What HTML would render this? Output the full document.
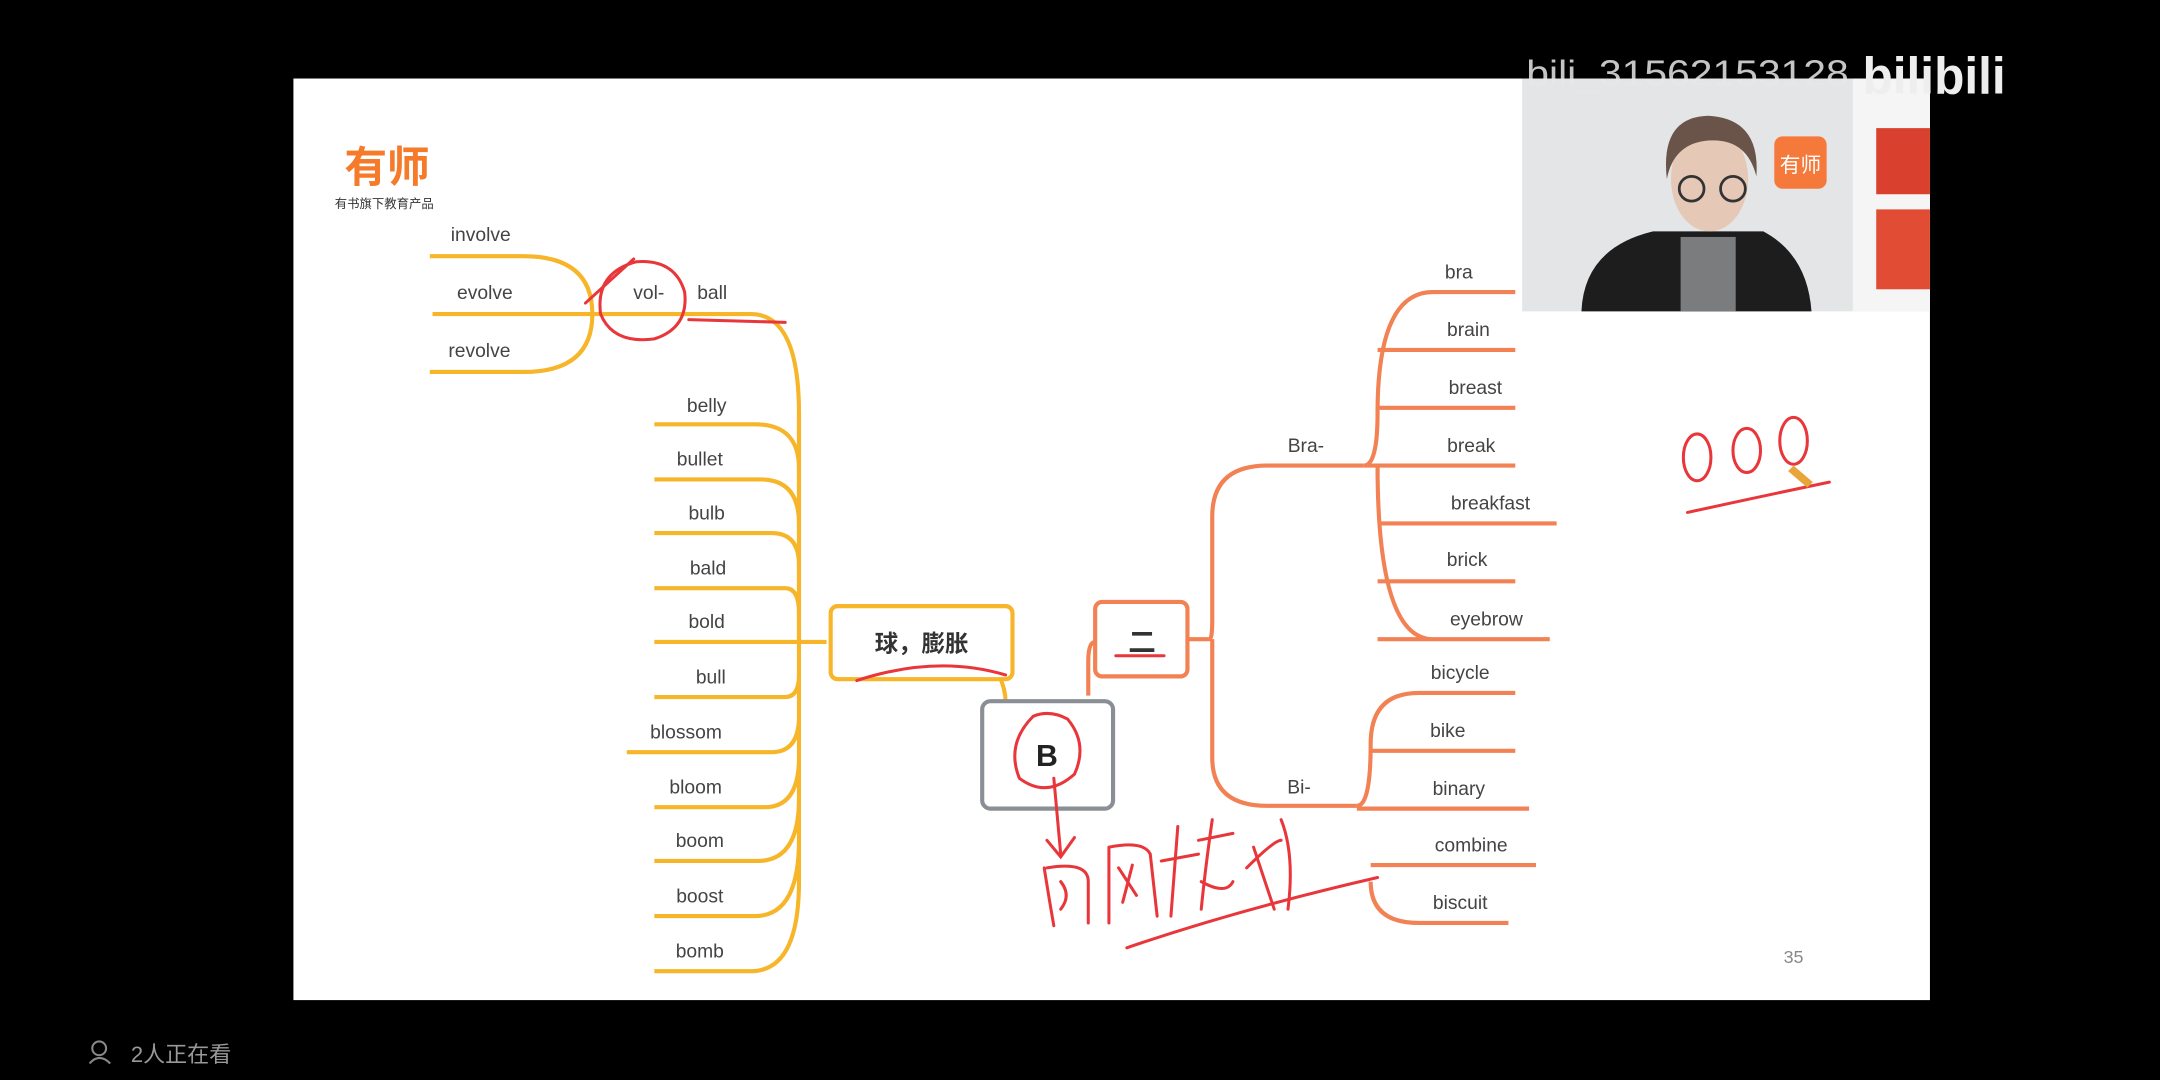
<!DOCTYPE html>
<html><head><meta charset="utf-8"><style>
html,body{margin:0;padding:0;background:#000;width:2160px;height:1080px;overflow:hidden}
svg{display:block}
text{font-family:"Liberation Sans","Noto Sans CJK SC",sans-serif}
</style></head><body>
<svg width="2160" height="1080" viewBox="0 0 1568 784" xmlns="http://www.w3.org/2000/svg">
<rect width="1568" height="784" fill="#000"/>
<rect x="213" y="57" width="1188" height="669" fill="#fff"/>
<text x="250" y="132" font-size="31" font-weight="bold" fill="#f57a2a" font-family="Noto Sans CJK SC,sans-serif">有师</text>
<text x="243" y="151" font-size="9" fill="#333" font-family="Noto Sans CJK SC,sans-serif">有书旗下教育产品</text>
<g fill="none" stroke="#f7b52a" stroke-width="3">
<path d="M312 186 H380 Q430 186 430 228 M314 228 H430 M312 270 H380 Q430 270 430 228"/>
<path d="M430 228 H545 Q580 228 580 300 V466"/>
<path d="M475 308 H548 Q580 308 580 340 M475 348 H552 Q580 348 580 380 M475 387 H560 Q580 387 580 410 M475 427 H570 Q580 427 580 445 M475 466 H600 M475 506 H570 Q580 506 580 490 M455 546 H560 Q580 546 580 520 M475 586 H555 Q580 586 580 550 M475 625 H550 Q580 625 580 580 M475 665 H548 Q580 665 580 610 M475 705 H545 Q580 705 580 640 V300"/>
<path d="M725 490 Q730 500 730 510"/>
</g>
<g font-size="14" fill="#444" text-anchor="middle">
<text x="349" y="175">involve</text><text x="352" y="217">evolve</text><text x="348" y="259">revolve</text>
<text x="471" y="217">vol-</text><text x="517" y="217">ball</text>
<text x="513" y="299">belly</text><text x="508" y="338">bullet</text><text x="513" y="377">bulb</text><text x="514" y="417">bald</text><text x="513" y="456">bold</text><text x="516" y="496">bull</text><text x="498" y="536">blossom</text><text x="505" y="576">bloom</text><text x="508" y="615">boom</text><text x="508" y="655">boost</text><text x="508" y="695">bomb</text>
</g>
<rect x="603" y="440" width="132" height="53" rx="5" fill="#fff" stroke="#f7b52a" stroke-width="3"/>
<text x="669" y="473" font-size="17" font-weight="bold" fill="#333" text-anchor="middle" font-family="Noto Sans CJK SC,sans-serif">球，膨胀</text>
<rect x="713" y="509" width="95" height="78" rx="6" fill="#fff" stroke="#8a8f96" stroke-width="3"/>
<text x="760" y="556" font-size="22" font-weight="bold" fill="#222" text-anchor="middle">B</text>
<g fill="none" stroke="#f28154" stroke-width="3">
<path d="M790 505 V480 Q790 466 795 466"/>
<path d="M862 464 H878 Q880 464 880 450 V375 Q880 338 920 338 H990 M880 464 V550 Q880 585 920 585 H985"/>
<path d="M990 338 Q1000 338 1000 300 Q1000 212 1040 212 H1100 M1000 254 Q1000 254 1040 254 H1100 M1000 296 H1100 M990 338 H1100 M1000 380 H1130 M1000 422 H1100 M1000 464 H1125 M1000 338 Q1000 464 1040 464"/>
<path d="M985 585 Q995 585 995 540 Q995 503 1030 503 H1100 M995 545 H1100 M985 587 H1110 M995 628 H1115 M995 640 Q995 670 1030 670 H1095"/>
</g>
<rect x="795" y="437" width="67" height="54" rx="5" fill="#fff" stroke="#f28154" stroke-width="3"/>
<text x="829" y="473" font-size="20" font-weight="bold" fill="#333" text-anchor="middle" font-family="Noto Sans CJK SC,sans-serif">二</text>
<g font-size="14" fill="#444" text-anchor="middle">
<text x="948" y="328">Bra-</text><text x="943" y="576">Bi-</text>
<text x="1059" y="202">bra</text><text x="1066" y="244">brain</text><text x="1071" y="286">breast</text><text x="1068" y="328">break</text><text x="1082" y="370">breakfast</text><text x="1065" y="411">brick</text><text x="1079" y="454">eyebrow</text>
<text x="1060" y="493">bicycle</text><text x="1051" y="535">bike</text><text x="1059" y="577">binary</text><text x="1068" y="618">combine</text><text x="1060" y="660">biscuit</text>
</g>
<text x="1302" y="699" font-size="13" fill="#888" text-anchor="middle">35</text>
<g fill="none" stroke="#e8363a" stroke-width="2.2" stroke-linecap="round">
<path d="M462 190 Q432 198 436 228 Q445 250 475 246 Q500 238 497 212 Q490 188 462 190"/>
<path d="M425 220 L460 188 M500 232 L570 234"/>
<path d="M622 494 Q680 475 730 490"/>
<path d="M810 476 H845"/>
<path d="M750 520 Q730 540 740 565 Q760 580 780 562 Q790 540 775 522 Q762 515 750 520"/>
<path d="M765 565 L770 620 M760 610 L770 622 L780 608"/>
<path d="M758 630 Q762 655 765 672 M760 630 Q790 625 790 640 L790 670 M770 640 Q778 650 770 660 M805 615 L805 670 M805 615 Q830 610 835 620 L840 665 M812 630 L825 650 M822 628 L815 655"/>
<path d="M855 600 L850 665 M843 625 L870 620 M880 595 Q875 630 872 660 M870 610 L895 605 M872 640 Q890 650 895 640 M905 630 Q925 610 930 610 M910 615 L925 660 M930 595 Q940 620 935 660"/>
<path d="M818 688 Q900 660 1000 637"/>
<ellipse cx="1232" cy="332" rx="10" ry="17"/><ellipse cx="1268" cy="327" rx="10" ry="16"/><ellipse cx="1302" cy="320" rx="10" ry="17"/>
<path d="M1225 372 Q1280 360 1328 350"/>
</g>
<path d="M1302 338 L1316 350 L1312 354 L1298 342 Z" fill="#e8a53a"/>
<rect x="1105" y="57" width="296" height="169" fill="#e3e5e6"/>
<rect x="1345" y="57" width="56" height="169" fill="#f5f5f5"/>
<rect x="1362" y="93" width="39" height="48" fill="#d9402e"/>
<rect x="1362" y="152" width="39" height="58" fill="#e04c34"/>
<rect x="1288" y="99" width="38" height="38" rx="6" fill="#f5793b"/>
<text x="1307" y="125" font-size="15" fill="#fff" text-anchor="middle" font-family="Noto Sans CJK SC,sans-serif">有师</text>
<path d="M1148 226 Q1150 180 1200 168 L1280 168 Q1312 185 1315 226 Z" fill="#1d1d1d"/>
<rect x="1220" y="172" width="40" height="54" fill="#7b7c7e"/>
<ellipse cx="1241" cy="130" rx="28" ry="38" fill="#e5c8b5"/>
<path d="M1210 130 Q1205 85 1240 84 Q1278 86 1275 128 Q1268 100 1240 102 Q1215 104 1210 130Z" fill="#6a5348"/>
<g fill="none" stroke="#333" stroke-width="2"><circle cx="1228" cy="137" r="9"/><circle cx="1258" cy="137" r="9"/></g>
<text x="1108" y="62" font-size="26" fill="#e8e8e8" opacity="0.85" textLength="234" lengthAdjust="spacingAndGlyphs">bili_31562153128</text>
<text x="1352" y="68" font-size="38" font-weight="bold" fill="#eee" textLength="104" lengthAdjust="spacingAndGlyphs">bilibili</text>
<circle cx="72" cy="761" r="5" fill="none" stroke="#888" stroke-width="1.5"/>
<path d="M65 772 Q72 764 80 772" fill="none" stroke="#888" stroke-width="1.5"/>
<text x="95" y="771" font-size="16" fill="#999" font-family="Noto Sans CJK SC,sans-serif">2人正在看</text>
</svg>
</body></html>
